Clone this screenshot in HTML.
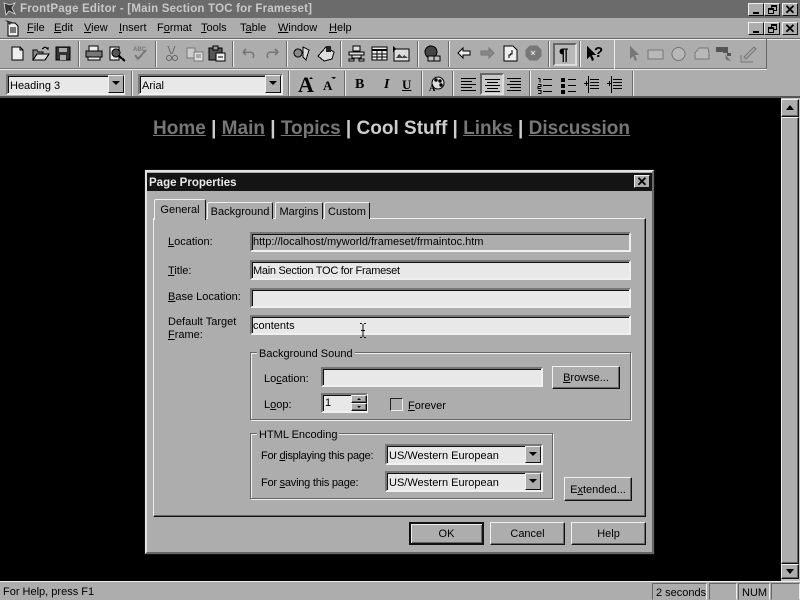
<!DOCTYPE html>
<html><head><meta charset="utf-8"><title>FrontPage Editor</title>
<style>
html,body{margin:0;padding:0;background:#000;}
body{width:800px;height:600px;position:relative;overflow:hidden;font-family:"Liberation Sans",sans-serif;font-size:11px;color:#000;}
#w{position:absolute;left:0;top:0;width:800px;height:600px;filter:blur(.3px);}
#w div{position:absolute;box-sizing:border-box;}
.t{white-space:nowrap;line-height:13px;}
.in{background:#e8e8e8;border:2px solid;border-color:#777 #f0f0f0 #f0f0f0 #777;box-shadow:inset 1px 0 0 #111,inset 0 1px 0 #111;padding:2px 0 0 1px;font-size:11px;line-height:13px;white-space:nowrap;}
.btn{background:#adadad;border:1px solid;border-color:#f0f0f0 #111 #111 #f0f0f0;box-shadow:inset -1px -1px 0 #666;text-align:center;font-size:11px;line-height:22px;}
.wb{background:#adadad;border:1px solid;border-color:#f0f0f0 #111 #111 #f0f0f0;width:16px;height:13px;}
.sep{width:2px;background:linear-gradient(90deg,#6a6a6a 50%,#eee 50%);}
.grp{border:1px solid #666;box-shadow:1px 1px 0 #eee,inset 1px 1px 0 #eee;}
.lg{background:#adadad;padding:0 2px;line-height:12px;white-space:nowrap;}
.dd{background:#adadad;border:1px solid;border-color:#f0f0f0 #111 #111 #f0f0f0;width:16px;}
.dd:after{content:"";position:absolute;left:3px;top:5px;border-left:4px solid transparent;border-right:4px solid transparent;border-top:4px solid #000;}
.tab{background:#adadad;border:1px solid #f0f0f0;border-bottom:0;border-right:1px solid #111;border-radius:2px 2px 0 0;text-align:center;line-height:19px;font-size:11px;}
u{text-decoration:underline;}
</style></head><body><div id="w">

<!-- title bar -->
<div style="left:0;top:0;width:800px;height:18px;background:#6b6b6b"></div>
<svg style="position:absolute;left:2px;top:1px" width="16" height="16" viewBox="0 0 16 16"><path d="M2 2l6 2 5-2-3 5 3 6-6-3-3 4z" fill="#333" stroke="#ddd" stroke-width=".8"/></svg>
<div class="t" style="left:20px;top:3px;font-weight:bold;font-size:11.5px;color:#c9c9c9;letter-spacing:.2px">FrontPage Editor - [Main Section TOC for Frameset]</div>
<div class="wb" style="left:748px;top:3px"><div style="left:4px;top:8px;width:6px;height:2px;background:#000"></div></div>
<div class="wb" style="left:764px;top:3px"><div style="left:6px;top:1px;width:6px;height:6px;border:1px solid #000;border-top-width:2px"></div><div style="left:3px;top:4px;width:6px;height:6px;border:1px solid #000;border-top-width:2px;background:#adadad"></div></div>
<div class="wb" style="left:782px;top:3px;font-size:13px;line-height:11px;text-align:center;font-weight:bold">✕</div>

<!-- menu bar -->
<div style="left:0;top:18px;width:800px;height:21px;background:#adadad;border-bottom:1px solid #666"></div>
<svg style="position:absolute;left:5px;top:19px" width="16" height="18" viewBox="0 0 16 18"><path d="M3 4h7l3 3v10H3z" fill="#eee" stroke="#000"/><path d="M5 9h6M5 11h6M5 13h6" stroke="#000"/><path d="M0 1l5 5 2-3z" fill="#333"/></svg>
<div class="t" style="left:27px;top:22px"><u>F</u>ile</div>
<div class="t" style="left:54px;top:22px"><u>E</u>dit</div>
<div class="t" style="left:84px;top:22px"><u>V</u>iew</div>
<div class="t" style="left:119px;top:22px"><u>I</u>nsert</div>
<div class="t" style="left:157px;top:22px">F<u>o</u>rmat</div>
<div class="t" style="left:201px;top:22px"><u>T</u>ools</div>
<div class="t" style="left:240px;top:22px">T<u>a</u>ble</div>
<div class="t" style="left:278px;top:22px"><u>W</u>indow</div>
<div class="t" style="left:329px;top:22px"><u>H</u>elp</div>
<div class="wb" style="left:748px;top:22px"><div style="left:4px;top:8px;width:6px;height:2px;background:#000"></div></div>
<div class="wb" style="left:764px;top:22px"><div style="left:6px;top:1px;width:6px;height:6px;border:1px solid #000;border-top-width:2px"></div><div style="left:3px;top:4px;width:6px;height:6px;border:1px solid #000;border-top-width:2px;background:#adadad"></div></div>
<div class="wb" style="left:782px;top:22px;font-size:13px;line-height:11px;text-align:center;font-weight:bold">✕</div>

<!-- toolbars -->
<div style="left:0;top:39px;width:800px;height:59px;background:#adadad;border-top:1px solid #eee"></div>
<div style="left:0;top:68px;width:767px;height:1px;background:#777"></div>
<div style="left:0;top:69px;width:767px;height:1px;background:#eee"></div>
<div style="left:0;top:96px;width:800px;height:2px;background:#555"></div>
<div style="left:614px;top:39px;width:1px;height:30px;background:#eee"></div>
<div style="left:766px;top:39px;width:1px;height:30px;background:#666"></div>

<div class="sep" style="left:78px;top:41px;height:26px"></div>
<div class="sep" style="left:155px;top:41px;height:26px"></div>
<div class="sep" style="left:232px;top:41px;height:26px"></div>
<div class="sep" style="left:286px;top:41px;height:26px"></div>
<div class="sep" style="left:340px;top:41px;height:26px"></div>
<div class="sep" style="left:417px;top:41px;height:26px"></div>
<div class="sep" style="left:448px;top:41px;height:26px"></div>
<div class="sep" style="left:548px;top:41px;height:26px"></div>
<div class="sep" style="left:579px;top:41px;height:26px"></div>
<div class="sep" style="left:131px;top:71px;height:25px"></div>
<div class="sep" style="left:288px;top:71px;height:25px"></div>
<div class="sep" style="left:344px;top:71px;height:25px"></div>
<div class="sep" style="left:421px;top:71px;height:25px"></div>
<div class="sep" style="left:452px;top:71px;height:25px"></div>
<div class="sep" style="left:529px;top:71px;height:25px"></div>
<div class="sep" style="left:632px;top:71px;height:25px"></div>

<!-- pressed buttons -->
<div style="left:553px;top:43px;width:24px;height:23px;border:2px solid;border-color:#666 #ddd #ddd #666;background:#b8b8b8"></div>
<div style="left:480px;top:73px;width:24px;height:22px;border:2px solid;border-color:#666 #ddd #ddd #666;background:#c8c8c8"></div>

<!-- toolbar icons -->
<svg style="position:absolute;left:0;top:0" width="800" height="100" viewBox="0 0 800 100" fill="none" stroke-width="1" shape-rendering="crispEdges">
<path d="M12 47h8l3 3v10H12z" fill="#eee" stroke="#000"/><path d="M20 47v3h3" stroke="#000"/>
<path d="M33 50h4l1 2h5v8H33z" fill="#888" stroke="#000"/><path d="M33 60l4-6h12l-4 6z" fill="#ddd" stroke="#000"/><path d="M42 49l3-2 3 2M48 47v3" stroke="#000"/>
<path d="M56 47h14v13H56z" fill="#333" stroke="#000"/><path d="M59 48h8v4h-8zM60 55h6v5h-6z" fill="#aaa"/>
<path d="M89 46h9v5h-9z" fill="#eee" stroke="#000"/><path d="M86 51h16v6H86z" fill="#777" stroke="#000"/><path d="M88 57h12v3H88z" fill="#eee" stroke="#000"/>
<path d="M110 47h9v13h-9z" fill="#eee" stroke="#000"/><circle cx="116" cy="53" r="4" fill="#555" stroke="#000"/><path d="M119 56l6 5" stroke="#000" stroke-width="2"/>
<text x="133" y="51" font-family="Liberation Sans" font-size="6" font-weight="bold" fill="#777">ABC</text><path d="M135 55l3 4 8-9" stroke="#777" stroke-width="2"/>
<path d="M168 46l3 8M175 46l-3 8" stroke="#666"/><circle cx="169" cy="58" r="2.500" stroke="#666"/><circle cx="175" cy="58" r="2.500" stroke="#666"/>
<path d="M187 48h8v10h-8z" fill="#ccc" stroke="#777"/><path d="M194 52h9v9h-9z" fill="#ddd" stroke="#777"/><path d="M196 55h5M196 57h5" stroke="#777"/>
<path d="M209 48h13v12h-13z" fill="#555" stroke="#000"/><path d="M213 46h5v4h-5z" fill="#999" stroke="#000"/><path d="M216 53h9v8h-9z" fill="#eee" stroke="#000"/><path d="M218 57h5" stroke="#000"/>
<path d="M243 52h8q4 2 2 6M243 52l3-3M243 52l3 3" stroke="#777" stroke-width="1.500"/><path d="M278 52h-8q-4 2-2 6M278 52l-3-3M278 52l-3 3" stroke="#777" stroke-width="1.500"/>
<circle cx="298" cy="53" r="4" fill="#888" stroke="#000"/><path d="M303 47l6 3-3 10-3-3z" fill="#ddd" stroke="#000"/>
<path d="M318 56l8-9 8 5-2 7-8 2z" fill="#ddd" stroke="#000"/><path d="M326 46h5v6h-5z" fill="#222"/>
<path d="M353 46h7v5h-7zM349 52h15v3H349zM352 55h9v3h-9zM349 59h5v2h-5zM359 59h5v2h-5z" fill="#ddd" stroke="#000"/>
<path d="M372 47h15v13H372z" fill="#eee" stroke="#000"/><path d="M372 49h15v2H372z" fill="#000"/><path d="M377 51v9M382 51v9M372 54h15M372 57h15" stroke="#000"/>
<path d="M394 49h15v12H394z" fill="#ddd" stroke="#000"/><path d="M396 58l3-4 3 3 2-2 4 3z" fill="#444"/><path d="M393 46v6l3-3z" fill="#000"/>
<circle cx="431" cy="52" r="6" fill="#444" stroke="#000"/><path d="M428 56h12v5h-12z" fill="#bbb" stroke="#000"/><path d="M434 56v5" stroke="#000"/>
<path d="M458 53l5-5v3h7v4h-7v3z" fill="#eee" stroke="#000"/>
<path d="M494 53l-5-5v3h-8v4h8v3z" fill="#888" stroke="#777"/>
<path d="M504 46h9l4 4v11H504z" fill="#eee" stroke="#000"/><path d="M512 50v4h-2M509 58v-3h2" stroke="#000"/>
<path d="M530 46h7l4 4v6l-4 4h-7l-4-4v-6z" fill="#777" stroke="#777"/><path d="M531 51l4 4M535 51l-4 4" stroke="#ddd"/>
<path d="M587 46v13l3-3 2 5 2-1-2-5h4z" fill="#000"/>
<path d="M630 46v13l3-3 2 5 2-1-2-5h4z" fill="#777"/>
<path d="M648 50h15v9h-15z" fill="#b8b8b8" stroke="#777"/>
<circle cx="678.500" cy="54" r="6.500" fill="#b8b8b8" stroke="#777"/>
<path d="M695 53l4-5h9l1 5v6h-14z" fill="#b8b8b8" stroke="#777"/>
<path d="M716 47h12v6h3v3h-4v-3h-4v-1h-7z" fill="#555"/><path d="M725 54l6 7-5-1z" fill="#777"/>
<path d="M744 57l10-10 2 2-10 10zM741 55v7h12" fill="#aaa" stroke="#777"/>
</svg>

<div class="t" style="left:559px;top:44px;font:bold 17px/22px 'Liberation Sans',sans-serif">¶</div>
<div class="t" style="left:594px;top:44px;font-size:15px;font-weight:bold;line-height:18px">?</div>

<!-- comboboxes -->
<div class="in" style="left:6px;top:74px;width:119px;height:21px;padding:4px 0 0 2px">Heading 3</div>
<div class="dd" style="left:108px;top:75px;height:18px"></div>
<div class="in" style="left:138px;top:74px;width:145px;height:21px;padding:4px 0 0 2px">Arial</div>
<div class="dd" style="left:265px;top:75px;height:18px"></div>

<!-- format icons -->
<div class="t" style="left:298px;top:74px;font:bold 22px/22px 'Liberation Serif',serif">A</div>
<div class="t" style="left:323px;top:78px;font:bold 13px/15px 'Liberation Serif',serif">A</div>
<svg style="position:absolute;left:0;top:70px" width="800" height="28" viewBox="0 0 800 28" fill="none" stroke="#000" stroke-width="1">
<path d="M309 9l2-2 2 2z" fill="#000" stroke="none"/><path d="M331 7h5l-2 2z" fill="#000" stroke="none"/>
<circle cx="438" cy="13" r="6" fill="#ddd"/><circle cx="436" cy="10" r="1.200" fill="#000"/><circle cx="440" cy="11" r="1.200" fill="#000"/><circle cx="441" cy="15" r="1.200" fill="#000"/>
<path d="M461 8.500h15M461 11.500h11M461 14.500h15M461 17.500h11M461 20.500h15"/>
<path d="M485 9.500h15M487 12.500h11M485 15.500h15M487 18.500h11M485 21.500h15"/>
<path d="M507 8.500h14M510 11.500h11M507 14.500h14M510 17.500h11M507 20.500h14"/>
<path d="M543 9.500h9M543 15.500h9M543 21.500h9"/><path d="M538 8.500h2v4M538 14.500h3v2h-3v2h3M538 20.500h3v3h-3"/>
<path d="M561 8h4v4h-4zM561 14h4v4h-4zM561 20h4v4h-4z" fill="#000" stroke="none"/><path d="M568 9.500h8M568 15.500h8M568 21.500h8"/>
<path d="M590 9.500h9M590 12.500h9M590 15.500h9M590 18.500h9M584 13.500h4M586.500 11v5M588.500 6v17" stroke-dasharray="none"/>
<path d="M613 9.500h9M613 12.500h9M613 15.500h9M613 18.500h9M607 13.500h4M609.500 11v5M611.500 6v17"/>
</svg>
<div class="t" style="left:355px;top:77px;font:bold 14px/15px 'Liberation Serif',serif">B</div>
<div class="t" style="left:384px;top:77px;font:italic bold 14px/15px 'Liberation Serif',serif">I</div>
<div class="t" style="left:402px;top:77px;font:bold 13px/15px 'Liberation Serif',serif;text-decoration:underline">U</div>
<div class="t" style="left:429px;top:84px;font:bold 9px/9px 'Liberation Serif',serif">A</div>

<!-- page -->
<div style="left:0;top:98px;width:781px;height:483px;background:#000"></div>
<div class="t" style="left:153px;top:117px;font-size:19px;line-height:23px;font-weight:bold;color:#cdcdcd;white-space:pre"><u style="color:#777">Home</u> | <u style="color:#777">Main</u> | <u style="color:#777">Topics</u> | Cool Stuff | <u style="color:#777">Links</u> | <u style="color:#777">Discussion</u></div>

<!-- scrollbar -->
<div style="left:781px;top:98px;width:19px;height:483px;background:#c4c4c4"></div>
<div class="btn" style="left:781px;top:99px;width:18px;height:18px"><div style="left:4px;top:5px;border-left:4px solid transparent;border-right:4px solid transparent;border-bottom:5px solid #000"></div></div>
<div class="btn" style="left:781px;top:117px;width:18px;height:447px"></div>
<div class="btn" style="left:781px;top:564px;width:18px;height:15px"><div style="left:4px;top:4px;border-left:4px solid transparent;border-right:4px solid transparent;border-top:5px solid #000"></div></div>

<!-- status bar -->
<div style="left:0;top:581px;width:800px;height:19px;background:#adadad;border-top:1px solid #eee"></div>
<div class="t" style="left:3px;top:586px">For Help, press F1</div>
<div class="t" style="left:652px;top:583px;width:55px;height:17px;border:1px solid;border-color:#666 #eee #adadad #666;padding:3px 0 0 3px;font-size:11px">2 seconds</div>
<div style="left:709px;top:583px;width:28px;height:17px;border:1px solid;border-color:#666 #eee #adadad #666"></div>
<div class="t" style="left:738px;top:583px;width:32px;height:17px;border:1px solid;border-color:#666 #eee #adadad #666;padding:3px 0 0 3px">NUM</div>
<div style="left:771px;top:583px;width:29px;height:17px;border:1px solid;border-color:#666 #eee #adadad #666"></div>

<!-- dialog -->
<div style="left:145px;top:170px;width:509px;height:384px;background:#adadad;border:2px solid;border-color:#e4e4e4 #666 #666 #e4e4e4;outline:1px solid #111"></div>
<div style="left:147px;top:173px;width:505px;height:18px;background:#141414"></div>
<div class="t" style="left:149px;top:177px;color:#e8e8e8;font-weight:bold;font-size:11.5px">Page Properties</div>
<div class="wb" style="left:634px;top:175px;font-size:13px;line-height:11px;text-align:center;font-weight:bold">✕</div>

<!-- tab panel -->
<div style="left:153px;top:218px;width:493px;height:299px;background:#adadad;border:1px solid;border-color:#eee #111 #111 #eee;box-shadow:inset -1px -1px 0 #666"></div>
<div class="tab" style="left:207px;top:202px;width:66px;height:17px">Background</div>
<div class="tab" style="left:275px;top:202px;width:48px;height:17px">Margins</div>
<div class="tab" style="left:324px;top:202px;width:46px;height:17px">Custom</div>
<div class="tab" style="left:154px;top:199px;width:52px;height:21px;line-height:21px;z-index:2">General</div>

<div class="t" style="left:168px;top:236px"><u>L</u>ocation:</div>
<div class="t" style="left:168px;top:265px"><u>T</u>itle:</div>
<div class="t" style="left:168px;top:291px"><u>B</u>ase Location:</div>
<div class="t" style="left:168px;top:316px">Default Target<br><u>F</u>rame:</div>

<div class="in" style="left:250px;top:232px;width:381px;height:20px;background:#adadad">http://localhost/myworld/frameset/frmaintoc.htm</div>
<div class="in" style="left:250px;top:260px;width:381px;height:20px;padding-top:3px;letter-spacing:-.28px">Main Section TOC for Frameset</div>
<div class="in" style="left:250px;top:288px;width:381px;height:20px"></div>
<div class="in" style="left:250px;top:315px;width:381px;height:20px;padding-top:3px">contents</div>
<svg style="position:absolute;left:359px;top:323px" width="9" height="16" fill="none" stroke="#111" shape-rendering="crispEdges"><path d="M1 .5h2M5 .5h2M4 1v13M1 14.500h2M5 14.500h2M2 7.500h4"/></svg>

<!-- background sound -->
<div class="grp" style="left:250px;top:352px;width:381px;height:68px"></div>
<div class="lg t" style="left:257px;top:348px">Background Sound</div>
<div class="t" style="left:264px;top:373px">Lo<u>c</u>ation:</div>
<div class="in" style="left:321px;top:367px;width:222px;height:20px"></div>
<div class="btn" style="left:552px;top:366px;width:68px;height:23px;line-height:23px"><u>B</u>rowse...</div>
<div class="t" style="left:264px;top:399px">L<u>o</u>op:</div>
<div class="in" style="left:321px;top:393px;width:47px;height:20px;padding:2px 0 0 2px">1</div>
<div class="btn" style="left:351px;top:395px;width:16px;height:8px"><div style="left:5px;top:2px;border-left:2px solid transparent;border-right:2px solid transparent;border-bottom:2px solid #000"></div></div>
<div class="btn" style="left:351px;top:403px;width:16px;height:8px"><div style="left:5px;top:2px;border-left:2px solid transparent;border-right:2px solid transparent;border-top:2px solid #000"></div></div>
<div style="left:390px;top:398px;width:13px;height:13px;background:#adadad;border:1px solid;border-color:#222 #eee #eee #222"></div>
<div class="t" style="left:408px;top:400px"><u>F</u>orever</div>

<!-- html encoding -->
<div class="grp" style="left:250px;top:433px;width:303px;height:66px"></div>
<div class="lg t" style="left:257px;top:429px">HTML Encoding</div>
<div class="t" style="left:261px;top:450px;letter-spacing:-.28px">For <u>d</u>isplaying this page:</div>
<div class="t" style="left:261px;top:477px;letter-spacing:-.23px">For <u>s</u>aving this page:</div>
<div class="in" style="left:385px;top:444px;width:158px;height:21px;padding:4px 0 0 2px">US/Western European</div>
<div class="dd" style="left:525px;top:446px;height:17px"></div>
<div class="in" style="left:385px;top:471px;width:158px;height:21px;padding:4px 0 0 2px">US/Western European</div>
<div class="dd" style="left:525px;top:473px;height:17px"></div>
<div class="btn" style="left:564px;top:477px;width:68px;height:24px;line-height:25px">E<u>x</u>tended...</div>

<!-- buttons -->
<div class="btn" style="left:409px;top:522px;width:75px;height:23px;border:2px solid #111;line-height:21px;box-shadow:inset 1px 1px 0 #eee,inset -1px -1px 0 #666">OK</div>
<div class="btn" style="left:490px;top:522px;width:75px;height:23px;line-height:23px">Cancel</div>
<div class="btn" style="left:571px;top:522px;width:75px;height:23px;line-height:23px">Help</div>

</div></body></html>
